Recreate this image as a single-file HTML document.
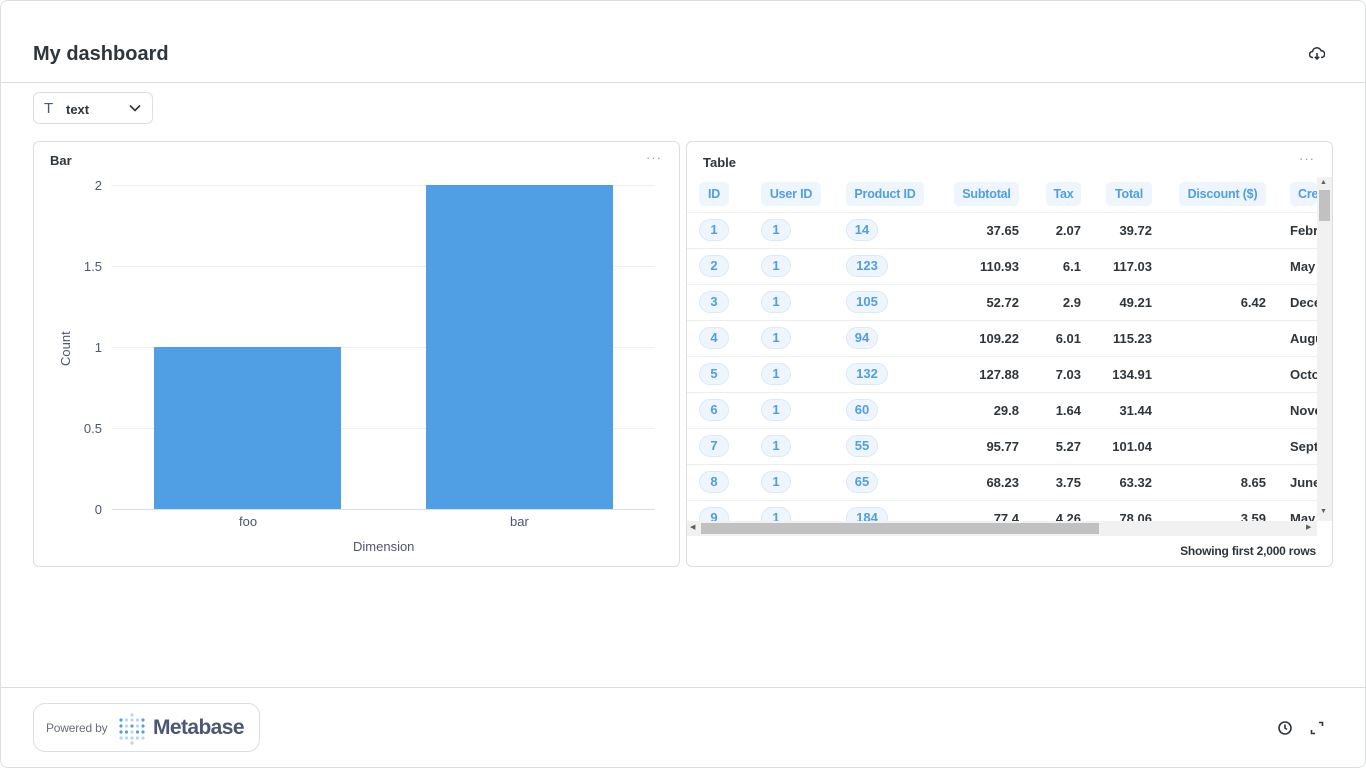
<!DOCTYPE html>
<html><head><style>
*{box-sizing:border-box;margin:0;padding:0}
body{width:1366px;height:768px;background:#fff;font-family:"Liberation Sans",sans-serif;color:#2e353b;position:relative;overflow:hidden}
.a{position:absolute}
.frame{left:0;top:0;width:1366px;height:768px;border:1px solid #dcdfe0;border-radius:8px}
.card{border:1px solid #dcdfe0;border-radius:6px;background:#fff}
.pill{position:absolute;height:22px;line-height:20px;border:1px solid #dbe9f8;background:#eef5fd;color:#509ee3;font-size:13px;font-weight:bold;border-radius:11px;text-align:center}
.hd{position:absolute;height:24px;line-height:24px;background:#eef5fd;color:#509ee3;font-size:12.5px;font-weight:bold;border-radius:5px;text-align:center;top:182px;white-space:nowrap;letter-spacing:-0.2px}
.num{position:absolute;font-size:13px;font-weight:bold;text-align:right;color:#2e353b}
.rl{position:absolute;left:687px;width:630px;height:1px;background:#eceeef}
.yl{position:absolute;font-size:13px;color:#4c5773;text-align:right;width:30px;left:72px}
.gl{position:absolute;left:112px;width:543px;height:1px;background:#eceeef}
</style></head><body>
<div class="a frame"></div>
<div class="a" style="left:33px;top:43px;font-size:20px;font-weight:bold">My dashboard</div>
<svg class="a" style="left:1309px;top:46px" width="16" height="16" viewBox="0 0 16 16" fill="none" stroke="#2e353b" stroke-width="1.6"><path d="M4 11.5H3.5a3 3 0 0 1 0-6 4.5 4.5 0 0 1 8.6-.8A3 3 0 0 1 12.5 11.5H12"/><path d="M8 7v6M5.8 10.8 8 13l2.2-2.2"/></svg>
<div class="a" style="left:0;top:82px;width:1366px;height:1px;background:#dcdfe0"></div>
<div class="a card" style="left:33px;top:92px;width:120px;height:32px;border-radius:6px"></div>
<div class="a" style="left:44px;top:100px;font-size:15px;color:#4c5773">T</div>
<div class="a" style="left:66px;top:102px;font-size:13px;font-weight:bold">text</div>
<svg class="a" style="left:128px;top:101px" width="14" height="14" viewBox="0 0 14 14" fill="none" stroke="#2e353b" stroke-width="1.6"><path d="M2 4.5l5 5 5-5"/></svg>

<div class="a card" style="left:33px;top:141px;width:647px;height:426px"></div>
<div class="a" style="left:50px;top:153px;font-size:13px;font-weight:bold">Bar</div>
<div class="a" style="left:646px;top:150px;font-size:13px;color:#949aab;letter-spacing:1px">···</div>
<div class="gl" style="top:185px"></div><div class="gl" style="top:266px"></div><div class="gl" style="top:347px"></div><div class="gl" style="top:428px"></div><div class="gl" style="top:509px;background:#dcdfe0"></div>
<div class="yl" style="top:178px">2</div><div class="yl" style="top:259px">1.5</div><div class="yl" style="top:340px">1</div><div class="yl" style="top:421px">0.5</div><div class="yl" style="top:502px">0</div>
<div class="a" style="left:154px;top:347px;width:187px;height:162px;background:#509ee3"></div>
<div class="a" style="left:426px;top:185px;width:187px;height:324px;background:#509ee3"></div>
<div class="a" style="left:239px;top:514px;font-size:13px;color:#4c5773">foo</div>
<div class="a" style="left:510px;top:514px;font-size:13px;color:#4c5773">bar</div>
<div class="a" style="left:353px;top:539px;font-size:13px;color:#4c5773">Dimension</div>
<div class="a" style="left:58px;font-size:13px;color:#4c5773;transform:rotate(-90deg);transform-origin:left top;top:366px">Count</div>

<div class="a card" style="left:686px;top:141px;width:647px;height:426px"></div>
<div class="a" style="left:703px;top:155px;font-size:13px;font-weight:bold">Table</div>
<div class="a" style="left:1299px;top:151px;font-size:13px;color:#949aab;letter-spacing:1px">···</div>
<div class="hd" style="left:699px;width:30px">ID</div>
<div class="hd" style="left:761px;width:60px">User ID</div>
<div class="hd" style="left:846px;width:78px">Product ID</div>
<div class="hd" style="left:954px;width:65px">Subtotal</div>
<div class="hd" style="left:1046px;width:35px">Tax</div>
<div class="hd" style="left:1106px;width:46px">Total</div>
<div class="hd" style="left:1179px;width:87px">Discount ($)</div>
<div class="hd" style="left:1290px;width:27px;overflow:hidden;text-align:left;padding-left:8px">Created</div>
<div class="rl" style="top:212px"></div>
<div class="rl" style="top:248px"></div><div class="rl" style="top:284px"></div><div class="rl" style="top:320px"></div><div class="rl" style="top:356px"></div><div class="rl" style="top:392px"></div><div class="rl" style="top:428px"></div><div class="rl" style="top:464px"></div><div class="rl" style="top:500px"></div>
<div style="position:absolute;left:687px;top:213px;width:630px;height:308px;overflow:hidden">
<div style="position:relative;left:-687px;top:-213px">
<div class="pill" style="left:699px;top:219px;width:30px">1</div><div class="pill" style="left:761px;top:219px;width:30px">1</div><div class="pill" style="left:846px;top:219px;width:32px">14</div><div class="num" style="left:940px;top:223px;width:79px">37.65</div><div class="num" style="left:1030px;top:223px;width:51px">2.07</div><div class="num" style="left:1090px;top:223px;width:62px">39.72</div><div class="num" style="left:1290px;top:223px;text-align:left">February</div>
<div class="pill" style="left:699px;top:255px;width:30px">2</div><div class="pill" style="left:761px;top:255px;width:30px">1</div><div class="pill" style="left:846px;top:255px;width:42px">123</div><div class="num" style="left:940px;top:259px;width:79px">110.93</div><div class="num" style="left:1030px;top:259px;width:51px">6.1</div><div class="num" style="left:1090px;top:259px;width:62px">117.03</div><div class="num" style="left:1290px;top:259px;text-align:left">May</div>
<div class="pill" style="left:699px;top:291px;width:30px">3</div><div class="pill" style="left:761px;top:291px;width:30px">1</div><div class="pill" style="left:846px;top:291px;width:42px">105</div><div class="num" style="left:940px;top:295px;width:79px">52.72</div><div class="num" style="left:1030px;top:295px;width:51px">2.9</div><div class="num" style="left:1090px;top:295px;width:62px">49.21</div><div class="num" style="left:1180px;top:295px;width:86px">6.42</div><div class="num" style="left:1290px;top:295px;text-align:left">December</div>
<div class="pill" style="left:699px;top:327px;width:30px">4</div><div class="pill" style="left:761px;top:327px;width:30px">1</div><div class="pill" style="left:846px;top:327px;width:32px">94</div><div class="num" style="left:940px;top:331px;width:79px">109.22</div><div class="num" style="left:1030px;top:331px;width:51px">6.01</div><div class="num" style="left:1090px;top:331px;width:62px">115.23</div><div class="num" style="left:1290px;top:331px;text-align:left">August</div>
<div class="pill" style="left:699px;top:363px;width:30px">5</div><div class="pill" style="left:761px;top:363px;width:30px">1</div><div class="pill" style="left:846px;top:363px;width:42px">132</div><div class="num" style="left:940px;top:367px;width:79px">127.88</div><div class="num" style="left:1030px;top:367px;width:51px">7.03</div><div class="num" style="left:1090px;top:367px;width:62px">134.91</div><div class="num" style="left:1290px;top:367px;text-align:left">October</div>
<div class="pill" style="left:699px;top:399px;width:30px">6</div><div class="pill" style="left:761px;top:399px;width:30px">1</div><div class="pill" style="left:846px;top:399px;width:32px">60</div><div class="num" style="left:940px;top:403px;width:79px">29.8</div><div class="num" style="left:1030px;top:403px;width:51px">1.64</div><div class="num" style="left:1090px;top:403px;width:62px">31.44</div><div class="num" style="left:1290px;top:403px;text-align:left">November</div>
<div class="pill" style="left:699px;top:435px;width:30px">7</div><div class="pill" style="left:761px;top:435px;width:30px">1</div><div class="pill" style="left:846px;top:435px;width:32px">55</div><div class="num" style="left:940px;top:439px;width:79px">95.77</div><div class="num" style="left:1030px;top:439px;width:51px">5.27</div><div class="num" style="left:1090px;top:439px;width:62px">101.04</div><div class="num" style="left:1290px;top:439px;text-align:left">September</div>
<div class="pill" style="left:699px;top:471px;width:30px">8</div><div class="pill" style="left:761px;top:471px;width:30px">1</div><div class="pill" style="left:846px;top:471px;width:32px">65</div><div class="num" style="left:940px;top:475px;width:79px">68.23</div><div class="num" style="left:1030px;top:475px;width:51px">3.75</div><div class="num" style="left:1090px;top:475px;width:62px">63.32</div><div class="num" style="left:1180px;top:475px;width:86px">8.65</div><div class="num" style="left:1290px;top:475px;text-align:left">June</div>
<div class="pill" style="left:699px;top:507px;width:30px">9</div><div class="pill" style="left:761px;top:507px;width:30px">1</div><div class="pill" style="left:846px;top:507px;width:42px">184</div><div class="num" style="left:940px;top:511px;width:79px">77.4</div><div class="num" style="left:1030px;top:511px;width:51px">4.26</div><div class="num" style="left:1090px;top:511px;width:62px">78.06</div><div class="num" style="left:1180px;top:511px;width:86px">3.59</div><div class="num" style="left:1290px;top:511px;text-align:left">May</div>
</div></div>
<div class="a" style="left:1317px;top:177px;width:15px;height:344px;background:#f1f1f1"></div>
<div class="a" style="left:1319px;top:190px;width:11px;height:31px;background:#c1c1c1"></div>
<div class="a" style="left:1320px;top:179px;font-size:7px;color:#606060">▲</div>
<div class="a" style="left:1320px;top:508px;font-size:7px;color:#606060">▼</div>
<div class="a" style="left:687px;top:521px;width:630px;height:15px;background:#f1f1f1"></div>
<div class="a" style="left:701px;top:523px;width:398px;height:11px;background:#c1c1c1"></div>
<div class="a" style="left:690px;top:523px;font-size:7px;color:#606060">◀</div>
<div class="a" style="left:1306px;top:523px;font-size:7px;color:#606060">▶</div>
<div class="a" style="left:1100px;top:544px;width:216px;text-align:right;font-size:12px;font-weight:bold;letter-spacing:-0.2px">Showing first 2,000 rows</div>

<div class="a" style="left:0;top:687px;width:1366px;height:1px;background:#dcdfe0"></div>
<div class="a card" style="left:33px;top:703px;width:227px;height:49px;border-radius:12px"></div>
<div class="a" style="left:46px;top:721px;font-size:12px;color:#696e7b;letter-spacing:-0.2px">Powered by</div>
<svg class="a" style="left:119px;top:713px" width="28" height="32" viewBox="0 0 28 32">
<g fill="#509ee3"><circle cx="2" cy="7" r="1.6"/><circle cx="2" cy="13" r="1.6"/><circle cx="2" cy="19" r="1.6"/><circle cx="24" cy="7" r="1.6"/><circle cx="24" cy="13" r="1.6"/><circle cx="24" cy="19" r="1.6"/><circle cx="13" cy="13" r="1.6"/><circle cx="7.5" cy="19" r="1.6"/><circle cx="18.5" cy="19" r="1.6"/></g>
<g fill="#b8d6f4"><circle cx="13" cy="2" r="1.6"/><circle cx="7.5" cy="7" r="1.6"/><circle cx="13" cy="7" r="1.6"/><circle cx="18.5" cy="7" r="1.6"/><circle cx="7.5" cy="13" r="1.6"/><circle cx="18.5" cy="13" r="1.6"/><circle cx="13" cy="19" r="1.6"/><circle cx="13" cy="25" r="1.6"/><circle cx="2" cy="25" r="1.6"/><circle cx="24" cy="25" r="1.6"/><circle cx="7.5" cy="25" r="1.6"/><circle cx="18.5" cy="25" r="1.6"/><circle cx="13" cy="30" r="1.6"/></g></svg>
<div class="a" style="left:153px;top:716px;font-size:21px;font-weight:bold;color:#4c5773;letter-spacing:-0.6px">Metabase</div>
<svg class="a" style="left:1277px;top:720px" width="16" height="16" viewBox="0 0 16 16" fill="none" stroke="#2e353b" stroke-width="1.6"><circle cx="8" cy="8" r="6"/><path d="M8 4.5V8l2 1.5"/></svg>
<svg class="a" style="left:1309px;top:720px" width="16" height="16" viewBox="0 0 16 16" fill="none" stroke="#2e353b" stroke-width="1.6"><path d="M10 2.5h3.5V6M6 13.5H2.5V10"/></svg>
</body></html>
